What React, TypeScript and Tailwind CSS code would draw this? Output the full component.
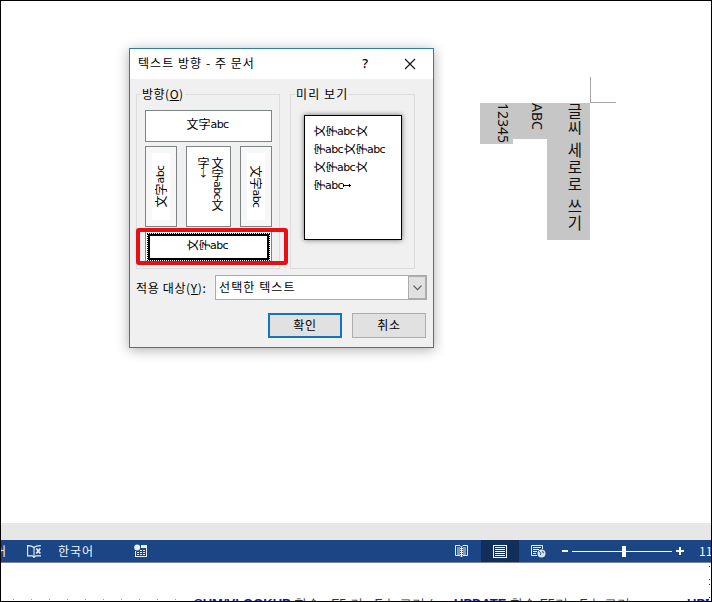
import React from "react";

const ui = "font-['Noto_Sans_CJK_KR','Noto_Sans',sans-serif]";
const han = "font-['Noto_Sans_CJK_JP','Noto_Sans',sans-serif]";

function Turned({ children }: { children: React.ReactNode }) {
  return <span className="inline-block h-3 w-3 -rotate-90 text-center text-[11.5px] leading-3">{children}</span>;
}

function Abc() {
  return <span className="inline-block font-['DejaVu_Sans',sans-serif] text-[11px] leading-[13px] tracking-[-0.6px]">abc</span>;
}

function SideLine({ parts }: { parts: string[] }) {
  return (
    <div className="flex h-[18px] items-center">
      {parts.map((p, i) => (p === "abc" ? <Abc key={i} /> : <Turned key={i}>{p}</Turned>))}
    </div>
  );
}

function Group({ title, className, children }: { title: React.ReactNode; className: string; children: React.ReactNode }) {
  return (
    <fieldset className={"h-[184px] min-w-0 " + className}>
      <div className="-mb-[9px] flex h-[19px] items-center">
        <span className="h-px w-[5px] bg-[#dcdcdc]" />
        <span className="px-px pb-[2px] text-xs leading-[17px]">{title}</span>
        <span className="h-px flex-1 bg-[#dcdcdc]" />
      </div>
      <div className="h-[174px] border border-t-0 border-[#dcdcdc]">{children}</div>
    </fieldset>
  );
}

const cell = "flex items-center justify-center border border-[#7f8486] bg-white";
const shaded = " shadow-[inset_0_0_0_6px_#f7f7f7]";

function Dialog() {
  return (
    <div className={"absolute left-[128px] top-[47px] h-[300px] w-[305px] border border-[#2e7da6] bg-[#f0f0f0] text-xs text-black shadow-[0_2px_12px_rgba(0,0,0,0.32)] " + ui}>
      <div className="flex h-[30px] items-center bg-white pl-2 pr-[17px]">
        <span className="flex-1 pb-[2px] tracking-[1.05px]">텍스트 방향 - 주 문서</span>
        <span className="mr-[36px] font-['Noto_Sans',sans-serif] text-[13px] font-medium">?</span>
        <svg width="12" height="12" viewBox="0 0 12 12" stroke="#111" strokeWidth="1.1"><path d="M1 1l10 10M11 1L1 11" /></svg>
      </div>
      <div className="flex gap-[10px] pl-[6px] pt-[6px]">
        <Group title={<span className="tracking-[0.5px]">방향(<u>O</u>)</span>} className="w-[144px]">
          <div className="flex flex-col gap-1 px-2 pt-[15px]">
            <div className={cell + " h-8 w-[127px] pb-[4px] pr-[2px] " + han}>文字<Abc /></div>
            <div className="flex h-[81px] w-[127px] justify-between">
              <div className={cell + " w-8 pr-[2px] " + han + shaded}>
                <span className="flex -rotate-90 items-center whitespace-nowrap leading-3">文字<Abc /></span>
              </div>
              <div className={cell + " w-[45px] items-start justify-end pr-[6px] pt-[10px] " + han}>
                <div className="h-[60px] text-xs leading-[14px] [writing-mode:vertical-rl]">
                  文字<span className="font-['DejaVu_Sans',sans-serif] text-[11px] tracking-[-0.6px]">abc</span>文<br />字<span className="text-[9px]">→</span>
                </div>
              </div>
              <div className={cell + " w-8 " + han + shaded}>
                <span className="flex rotate-90 items-center whitespace-nowrap leading-3">文字<Abc /></span>
              </div>
            </div>
            <div className="h-8 w-[127px] border border-[#7f8486] bg-white p-px">
              <div className="h-full border border-dotted border-black">
                <div className={"flex h-full items-center justify-center border-2 border-black pb-[4px] pr-[3px] " + han}>
                  <SideLine parts={["文", "字", "abc"]} />
                </div>
              </div>
            </div>
          </div>
        </Group>
        <Group title={<span className="tracking-[1.1px]">미리 보기</span>} className="w-[125px]">
          <div className="px-[13px] pt-5">
            <div className={"h-[125px] w-[98px] border border-black bg-white pl-2 pt-[6px] shadow-[0_0_5px_rgba(0,0,0,0.55)] " + han}>
              <SideLine parts={["文", "字", "abc", "文"]} />
              <SideLine parts={["字", "abc", "文", "字", "abc"]} />
              <SideLine parts={["文", "字", "abc", "文"]} />
              <div className="flex items-center">
                <SideLine parts={["字", "abc"]} />
                <svg width="9" height="5" viewBox="0 0 9 5" shapeRendering="crispEdges"><path d="M0 1h1v3H0zM0 2h8v1H0zM6 1h1v3H6z" /></svg>
              </div>
            </div>
          </div>
        </Group>
      </div>
      <div className="mt-[6px] flex h-[25px] items-center pl-[6px]">
        <span className="w-[79px] whitespace-nowrap tracking-[0.65px]">적용 대상(<u>Y</u>):</span>
        <div className="flex h-[25px] w-[212px] border border-[#aaaaaa] bg-white">
          <span className="flex-1 pl-[3px] leading-[22px] tracking-[1.1px]">선택한 텍스트</span>
          <span className="flex w-[18px] items-center justify-center border border-[#adadad] bg-[#e1e1e1]">
            <svg width="9" height="6" viewBox="0 0 9 6" fill="none" stroke="#555" strokeWidth="1.2"><path d="M.5.7l4 4 4-4" /></svg>
          </span>
        </div>
      </div>
      <div className="flex gap-[10px] pl-[138px] pt-[13px]">
        <button className="h-[25px] w-[74px] border-2 border-[#1874b8] bg-[#e1e1e1] pb-px leading-5 tracking-[0.7px]">확인</button>
        <button className="h-[25px] w-[74px] border border-[#adadad] bg-[#e1e1e1] pb-px leading-[22px] tracking-[0.7px]">취소</button>
      </div>
      <div className="absolute left-[6px] top-[179px] h-[37px] w-[152px] rounded-[3px] border-4 border-[#e60f16]" />
    </div>
  );
}

function ProofIcon() {
  return (
    <svg className="shrink-0" width="15" height="13" viewBox="0 0 15 13" fill="none" stroke="#e8eef8" strokeWidth="1.1">
      <path d="M7 2.5C5.5 1 3 .6.6.6v10.3h4.7L7 12.4l1.8-1.5H14M7 2.5v9M7 2.5C8.5 1 11 .6 13.8.6" />
      <path d="M9.3 3.5l4 5M13.3 3.5l-4 5" strokeWidth="1.8" />
    </svg>
  );
}

function MacroIcon() {
  return (
    <svg className="shrink-0" width="14" height="14" viewBox="0 0 14 14" fill="#e8eef8">
      <circle cx="3.2" cy="3.5" r="3" />
      <path d="M7 1h6v3H7zM12 4h1v9H1V7h1v5h10z" />
      <path d="M6 6h2v1H6zM9 6h2v1H9zM3 8h2v1H3zM6 8h2v1H6zM9 8h2v1H9zM3 10h2v1H3zM6 10h2v1H6zM9 10h2v1H9z" />
    </svg>
  );
}

function ReadIcon() {
  return (
    <svg width="14" height="13" viewBox="0 0 14 13" fill="none" stroke="#e8eef8">
      <path d="M.5.5H5L6.5 2 8 .5h4.5v10H8L6.5 12 5 10.5H.5zM6.5 2v10M2 3h3l1 1M2 5h3l1 1M2 7h3l1 1M2 9h3l1 1M11 3H8L7 4M11 5H8L7 6M11 7H8L7 8M11 9H8l-1 1" />
    </svg>
  );
}

function PrintIcon() {
  return (
    <svg width="14" height="13" viewBox="0 0 14 13" fill="none" stroke="#f2f6fc" shapeRendering="crispEdges">
      <path d="M.5.5h13v12H.5zM2 2.5h10M2 4.5h10M2 6.5h10M2 8.5h10M2 10.5h10" />
    </svg>
  );
}

function WebIcon() {
  return (
    <svg width="15" height="13" viewBox="0 0 15 13" fill="none" stroke="#e8eef8">
      <path d="M6 10.5H.5V.5h11V4M2 2.5h8M2 4.5h6M2 6.5h4M2 8.5h3" />
      <circle cx="10.5" cy="8.5" r="4" fill="#d5e4f4" stroke="none" />
      <path d="M8 6.2l1.2 1 .8 1.6-.8 1.2M12.3 6l-1 1 1.7 1" stroke="#1b4584" strokeWidth=".9" />
    </svg>
  );
}

function StatusBar() {
  return (
    <div className={"flex h-[23px] items-center overflow-hidden whitespace-nowrap border-b border-[#7d8490] bg-[#1b4584] text-xs text-[#f2f6fc] [&>*]:shrink-0 " + ui}>
      <span className="-ml-[6px] w-[32px]">어</span>
      <ProofIcon />
      <span className="ml-4 w-[76px] tracking-[1px]">한국어</span>
      <MacroIcon />
      <span className="ml-[307px]"><ReadIcon /></span>
      <span className="ml-3 flex h-[22px] w-[38px] items-center justify-center bg-[#122f5c]"><PrintIcon /></span>
      <span className="ml-3"><WebIcon /></span>
      <span className="ml-4 h-[2px] w-[6px] bg-white" />
      <span className="ml-1 h-px w-[50px] bg-white" />
      <span className="h-[11px] w-1 bg-white" />
      <span className="h-px w-[46px] bg-white" />
      <svg className="ml-1" width="8" height="8" viewBox="0 0 8 8" fill="#fff"><path d="M3 0h2v3h3v2H5v3H3V5H0V3h3z" /></svg>
      <span className="ml-[15px]">110%</span>
    </div>
  );
}

export default function App() {
  return (
    <div className="flex h-[602px] w-[712px] flex-col overflow-hidden border border-black bg-white">
      <div className="relative h-[522px] shrink-0 bg-white">
        <div className="flex justify-end pr-[95px] pt-[76px]">
          <span className="h-[26px] w-[26px] border-b border-l border-[#a6a6a6]" />
        </div>
        <div className="flex items-start pl-[479px] text-[#111] [&>div]:bg-[#c6c6c6] [&>div]:[writing-mode:vertical-rl]">
          <div className="h-[41px] w-[33px] font-['Noto_Sans',sans-serif] text-[14px] leading-5">12345</div>
          <div className="h-[36px] w-[34px] font-['Noto_Sans',sans-serif] text-[14px] leading-5">ABC</div>
          <div className={"h-[137px] w-[43px] whitespace-nowrap pr-[5px] text-[15.5px] leading-5 tracking-[1.6px] " + ui}>글씨 세로로 쓰기</div>
        </div>
        <Dialog />
      </div>
      <div className="h-[17px] shrink-0 bg-[#e7e7e7]" />
      <div className="shrink-0"><StatusBar /></div>
      <div className="flex min-h-0 flex-1 overflow-hidden whitespace-nowrap font-['Liberation_Sans',sans-serif] text-[13px] leading-[15px] text-[#333] [&>*]:shrink-0">
        <div className="ml-3 mt-9 flex w-[181px] gap-[17px]">
          {Array.from({ length: 10 }, (_, i) => <span key={i} className="h-px w-px shrink-0 bg-[#999]" />)}
        </div>
        <div className="mt-[33px] w-[260px]"><b className="text-[#171799]">SUM/VLOOKUP</b> 함수 : F5 키 · F 누르기 /</div>
        <div className="mt-[33px] w-[233px]"><b className="text-[#171799]">UPDATE</b> 함수 F5키 · F 누르기</div>
        <b className="mt-[33px] w-[22px] overflow-hidden text-[#171799]">UPDATE</b>
        <div className="flex flex-col pt-[3px] [&>i]:h-px [&>i]:w-px [&>i]:bg-[#171799]">
          <i /><i className="mt-3" /><i className="mt-1" /><i className="mt-3" />
        </div>
      </div>
    </div>
  );
}
